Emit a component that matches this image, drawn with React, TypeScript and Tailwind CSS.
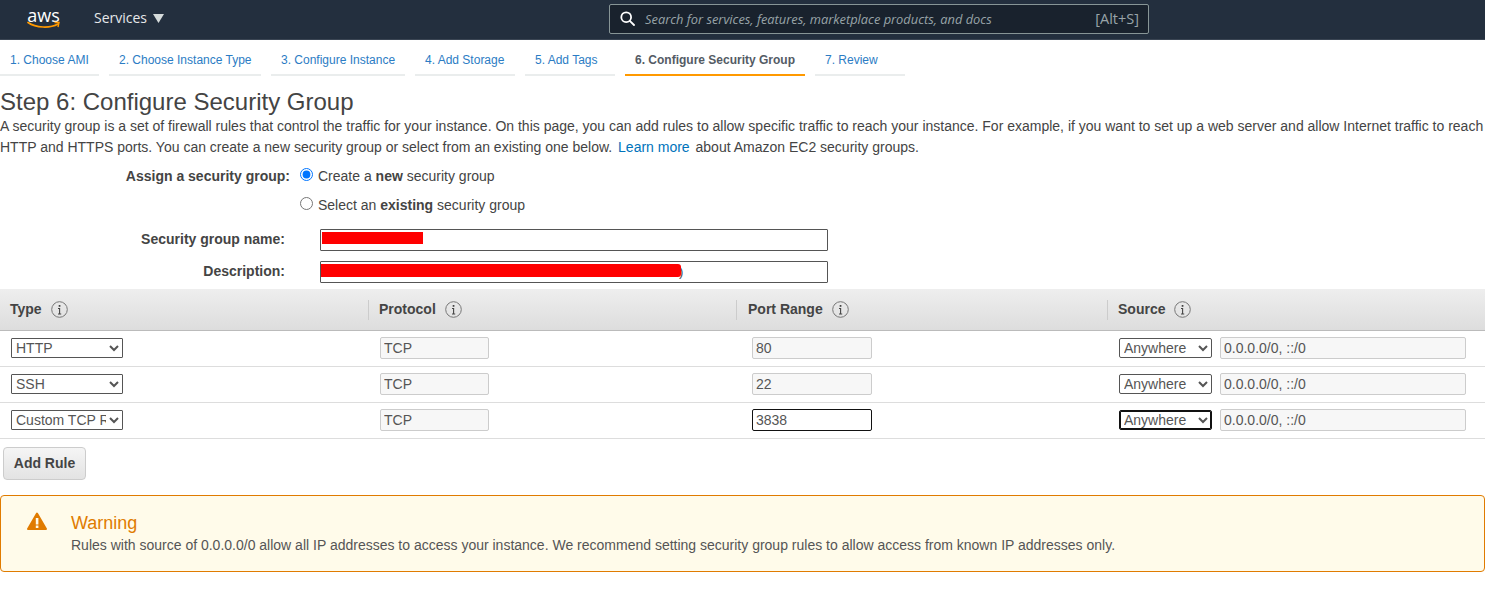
const tabs = [
  { label: "1. Choose AMI", w: "w-[99px]" },
  { label: "2. Choose Instance Type", w: "w-[152px]" },
  { label: "3. Configure Instance", w: "w-[134px]" },
  { label: "4. Add Storage", w: "w-[100px]" },
  { label: "5. Add Tags", w: "w-[90px]" },
  { label: "6. Configure Security Group", w: "w-[180px]", active: true },
  { label: "7. Review", w: "w-[90px]" },
];

const rules = [
  { type: "HTTP", port: "80" },
  { type: "SSH", port: "22" },
  { type: "Custom TCP Rule", port: "3838", focused: true },
];

function Info() {
  return (
    <svg width="17" height="17" viewBox="0 0 17 17" className="ml-[9px] shrink-0">
      <circle cx="8.5" cy="8.5" r="7.8" fill="none" stroke="#777" strokeWidth="1" />
      <rect x="7.7" y="4" width="1.7" height="1.8" fill="#444" />
      <path d="M7 7.5H8.6V13M7 13H10.2" fill="none" stroke="#444" strokeWidth="1.1" />
    </svg>
  );
}

function HeadCell({ label, divider, pad = "pl-[10px]" }: { label: string; divider?: boolean; pad?: string }) {
  return (
    <div className="flex h-full items-center">
      <div className={divider ? `flex h-[20px] items-center border-l border-[#ccc] ${pad}` : `flex items-center ${pad}`}>
        <span className="font-bold text-[#444]">{label}</span>
        <Info />
      </div>
    </div>
  );
}

function ReadOnly({ value, className }: { value: string; className: string }) {
  return (
    <input
      readOnly
      value={value}
      className={`h-[22px] rounded-[2px] border border-[#ccc] bg-[#f7f7f7] px-[3px] text-[14px] text-[#555] outline-none ${className}`}
    />
  );
}

export default function App() {
  return (
    <div className="h-[604px] w-full overflow-hidden bg-white font-['Liberation_Sans',sans-serif] text-[14px] text-[#444]">
      {/* Top bar */}
      <div className="flex h-[40px] items-center border-b border-[#3a4553] bg-[#232f3e] pb-[2px] font-['Open_Sans',sans-serif] text-white">
        <div className="ml-[27px] flex w-[33px] flex-col items-center">
          <span className="text-[18px] leading-[14px]">aws</span>
          <svg width="33" height="8" viewBox="0 0 33 8" className="-mt-[1px]">
            <path d="M1 1.5C9 7 23 7.5 31 3" fill="none" stroke="#ff9900" strokeWidth="1.7" strokeLinecap="round" />
            <path d="M27.5 1.5L32 1.5L31 6" fill="none" stroke="#ff9900" strokeWidth="1.4" />
          </svg>
        </div>
        <span className="ml-[34px] -mt-[3px] text-[14px] text-[#e6e8ea]">Services</span>
        <svg width="11" height="9" viewBox="0 0 11 9" className="ml-[6px]">
          <path d="M0 0H11L5.5 9Z" fill="#d5dbdb" />
        </svg>
        <div className="ml-[445px] flex h-[30px] w-[540px] items-center rounded-[2px] border border-[#879596] bg-[#19222d] pl-[10px] pr-[9px]">
          <svg width="15" height="15" viewBox="0 0 15 15" fill="none" stroke="#fff" strokeWidth="1.8">
            <circle cx="6.2" cy="6.2" r="4.9" />
            <path d="M9.8 9.8L14 14" strokeLinecap="round" />
          </svg>
          <span className="ml-[10px] mt-[2px] text-[12.85px] italic text-[#98a4a8]">Search for services, features, marketplace products, and docs</span>
          <span className="ml-auto text-[14.5px] text-[#98a4a8]">[Alt+S]</span>
        </div>
      </div>

      {/* Wizard tabs */}
      <div className="flex h-[36px] gap-[10px] text-[12px]">
        {tabs.map((t) => (
          <div
            key={t.label}
            className={`${t.w} flex items-center whitespace-nowrap border-b-2 pl-[10px] pt-[6px] ${
              t.active ? "border-[#ff9900] font-bold text-[#545b64]" : "border-[#eaeded] text-[#2b7cc4]"
            }`}
          >
            {t.label}
          </div>
        ))}
      </div>

      <h1 className="mt-[11px] text-[24px] leading-[30px] text-[#444]">Step 6: Configure Security Group</h1>
      <p className="-mt-[1px] mb-[1px] whitespace-nowrap leading-[20px]">
        A security group is a set of firewall rules that control the traffic for your instance. On this page, you can add rules to allow specific traffic to reach your instance. For example, if you want to set up a web server and allow Internet traffic to reach
      </p>
      <p className="leading-[20px]">
        HTTP and HTTPS ports. You can create a new security group or select from an existing one below. <span className="ml-[2px] mr-[2px] text-[#0073bb]">Learn more</span> about Amazon EC2 security groups.
      </p>

      {/* Assign form */}
      <div className="mt-[9px] grid grid-cols-[290px_1fr] items-center gap-y-[9px]">
        <div className="text-right font-bold leading-[20px]">Assign a security group:</div>
        <label className="ml-[10px] flex h-[20px] items-center">
          <input type="radio" name="sg" defaultChecked className="-mt-[4px] h-[13px] w-[13px]" />
          <span className="ml-[5px]">Create a <b>new</b> security group</span>
        </label>
        <div />
        <label className="ml-[10px] flex h-[20px] items-center">
          <input type="radio" name="sg" className="-mt-[4px] h-[13px] w-[13px]" />
          <span className="ml-[5px]">Select an <b>existing</b> security group</span>
        </label>
      </div>

      <div className="mt-[14px] grid grid-cols-[285px_508px] items-center gap-x-[35px] gap-y-[10px]">
        <div className="-mt-[2px] text-right font-bold">Security group name:</div>
        <div className="relative h-[22px] rounded-[1px] border border-[#555] bg-white">
          <div className="absolute left-[1px] top-[2px] h-[12px] w-[101px] bg-[#ff0000]" />
        </div>
        <div className="-mt-[2px] text-right font-bold">Description:</div>
        <div className="relative h-[22px] rounded-[1px] border border-[#555] bg-white">
          <span className="absolute left-[358px] top-[1px] text-[13px] leading-[18px] text-[#444]">)</span>
          <div className="absolute left-[0px] top-[2px] h-[13px] w-[360px] rounded-r-[3px] bg-[#ff0000]" />
        </div>
      </div>

      {/* Rules table */}
      <div className="mt-[6px]">
        <div className="grid h-[42px] grid-cols-[368px_368px_371px_1fr] border-b border-[#bbb] bg-gradient-to-b from-[#eeeeee] to-[#dddddd]">
          <HeadCell label="Type" />
          <HeadCell label="Protocol" divider />
          <HeadCell label="Port Range" divider pad="pl-[11px]" />
          <HeadCell label="Source" divider />
        </div>
        {rules.map((r) => (
          <div key={r.type} className="grid h-[36px] grid-cols-[368px_368px_371px_1fr] items-center border-b border-[#ddd] pb-[1px]">
            <div className="pl-[11px]">
              <select defaultValue={r.type} className="block h-[20px] w-[112px] rounded-[1px] border border-[#555] bg-white text-[14px] text-[#555]">
                <option>{r.type}</option>
              </select>
            </div>
            <div className="pl-[12px]">
              <ReadOnly value="TCP" className="block w-[109px]" />
            </div>
            <div className="pl-[16px]">
              {r.focused ? (
                <input readOnly value={r.port} className="block h-[22px] w-[120px] rounded-[2px] border border-[#111] bg-white px-[3px] text-[14px] text-[#555] outline-none" />
              ) : (
                <ReadOnly value={r.port} className="block w-[120px]" />
              )}
            </div>
            <div className="flex items-center pl-[12px]">
              <select
                defaultValue="Anywhere"
                className={`block h-[20px] w-[93px] rounded-[2px] border bg-white text-[14px] text-[#555] ${r.focused ? "border-[#111] shadow-[inset_0_0_0_1px_#111]" : "border-[#555]"}`}
              >
                <option>Anywhere</option>
              </select>
              <ReadOnly value="0.0.0.0/0, ::/0" className="ml-[8px] w-[246px]" />
            </div>
          </div>
        ))}
      </div>

      <button className="ml-[3px] mt-[8px] block h-[33px] w-[83px] rounded-[4px] border border-[#ccc] bg-gradient-to-b from-[#f5f5f5] to-[#e3e3e3] font-bold text-[#444]">
        Add Rule
      </button>

      {/* Warning */}
      <div className="mt-[15px] flex h-[77px] rounded-[4px] border border-[#e07b00] bg-[#fffbea]">
        <svg width="20" height="18" viewBox="0 0 20 18" className="ml-[26px] mt-[16px] shrink-0">
          <path d="M10 1.5L19 17H1Z" fill="#e07b00" stroke="#e07b00" strokeWidth="2" strokeLinejoin="round" />
          <rect x="8.8" y="6" width="2.6" height="6.5" fill="#fffbea" />
          <rect x="8.8" y="13.5" width="2.6" height="2.5" fill="#fffbea" />
        </svg>
        <div className="ml-[24px] mt-[16px]">
          <div className="text-[18px] leading-[22px] text-[#e07b00]">Warning</div>
          <div className="leading-[22px] text-[#555]">
            Rules with source of 0.0.0.0/0 allow all IP addresses to access your instance. We recommend setting security group rules to allow access from known IP addresses only.
          </div>
        </div>
      </div>
    </div>
  );
}
